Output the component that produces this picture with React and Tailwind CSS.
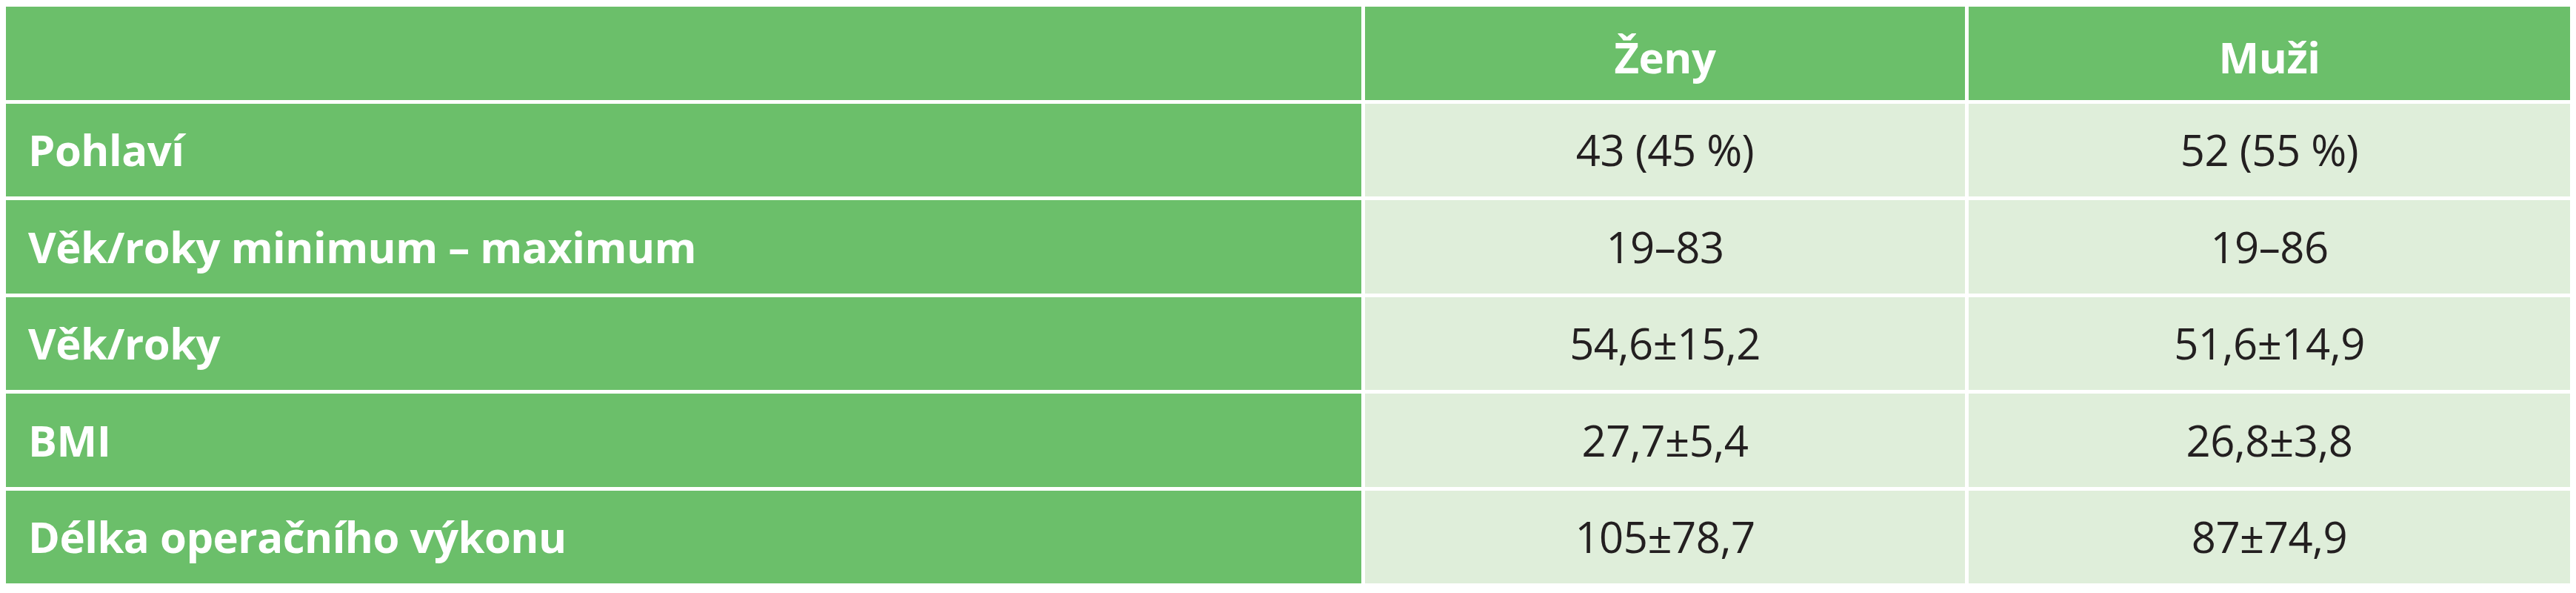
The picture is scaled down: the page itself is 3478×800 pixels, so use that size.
import React from "react";

const rows = [
  { label: "Pohlaví", zeny: "43 (45 %)", muzi: "52 (55 %)" },
  { label: "Věk/roky minimum – maximum", zeny: "19–83", muzi: "19–86" },
  { label: "Věk/roky", zeny: "54,6±15,2", muzi: "51,6±14,9" },
  { label: "BMI", zeny: "27,7±5,4", muzi: "26,8±3,8" },
  { label: "Délka operačního výkonu", zeny: "105±78,7", muzi: "87±74,9" },
];

const App = () => {
  return (
    <div className="w-[3478px] h-[800px] bg-white pt-[9px] px-[8px] font-['Open_Sans',sans-serif] text-[58px] leading-none tracking-[-0.5px]">
      <div className="grid grid-cols-[1830px_810px_812px] grid-rows-6 gap-[5px] h-[778px] bg-white">
        {/* header */}
        <div className="bg-[#6bbf6a]" />
        <div className="bg-[#6bbf6a] flex items-center justify-center pt-[10px] font-bold text-white">Ženy</div>
        <div className="bg-[#6bbf6a] flex items-center justify-center pt-[10px] font-bold text-white">Muži</div>

        {rows.map((row) => (
          <React.Fragment key={row.label}>
            <div className="bg-[#6bbf6a] flex items-center pl-[30px] font-bold text-white">{row.label}</div>
            <div className="bg-[#dfeeda] flex items-center justify-center text-[#231f20]">{row.zeny}</div>
            <div className="bg-[#dfeeda] flex items-center justify-center text-[#231f20]">{row.muzi}</div>
          </React.Fragment>
        ))}
      </div>
    </div>
  );
};

export default App;
